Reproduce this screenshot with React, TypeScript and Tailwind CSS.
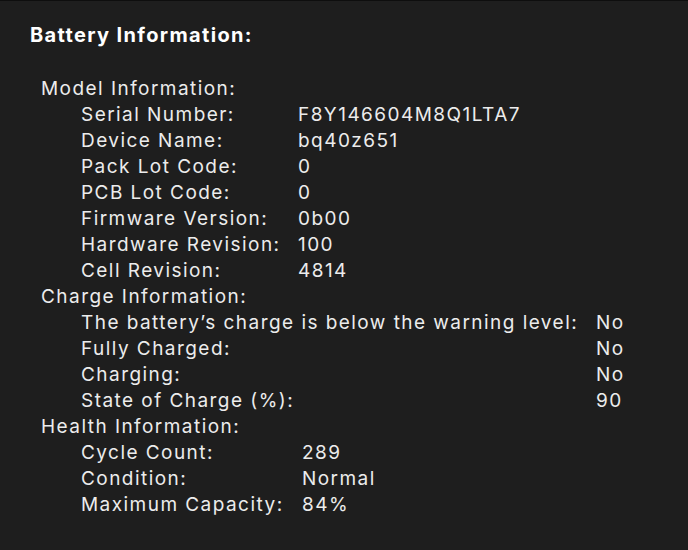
import React from "react";

type Row = [string, string];

const model: Row[] = [
  ["Serial Number:", "F8Y146604M8Q1LTA7"],
  ["Device Name:", "bq40z651"],
  ["Pack Lot Code:", "0"],
  ["PCB Lot Code:", "0"],
  ["Firmware Version:", "0b00"],
  ["Hardware Revision:", "100"],
  ["Cell Revision:", "4814"],
];

const charge: Row[] = [
  ["The battery\u2019s charge is below the warning level:", "No"],
  ["Fully Charged:", "No"],
  ["Charging:", "No"],
  ["State of Charge (%):", "90"],
];

const health: Row[] = [
  ["Cycle Count:", "289"],
  ["Condition:", "Normal"],
  ["Maximum Capacity:", "84%"],
];

function Group({ title, rows, labelW }: { title: string; rows: Row[]; labelW: string }) {
  return (
    <div>
      <div className="pl-[11px] h-[26px] leading-[26px]">{title}</div>
      <div className="pl-[51px]">
        {rows.map(([k, v]) => (
          <div key={k} className="flex h-[26px] leading-[26px]">
            <div className={labelW + " shrink-0 whitespace-nowrap"}>{k}</div>
            <div className="whitespace-nowrap">{v}</div>
          </div>
        ))}
      </div>
    </div>
  );
}

export default function App() {
  return (
    <div
      className="w-[688px] h-[550px] overflow-hidden bg-[#1e1e1e] border-t border-[#0e0e0e] text-[#ececec] text-[19px] tracking-[1.45px]"
      style={{ fontFamily: "Inter, 'Noto Sans', sans-serif" }}
    >
      <div className="pl-[30px] pt-[21px]">
        <div className="h-[26px] leading-[26px] text-[20px] font-bold text-white tracking-[1.35px]">Battery Information:</div>
        <div className="mt-[28px]">
          <Group title="Model Information:" rows={model} labelW="w-[217px]" />
          <Group title="Charge Information:" rows={charge} labelW="w-[515px]" />
          <Group title="Health Information:" rows={health} labelW="w-[221px]" />
        </div>
        <div className="mt-[36px] h-[26px] leading-[26px] text-[20px] font-bold text-white tracking-[1.35px]">System Power Settings:</div>
      </div>
    </div>
  );
}
